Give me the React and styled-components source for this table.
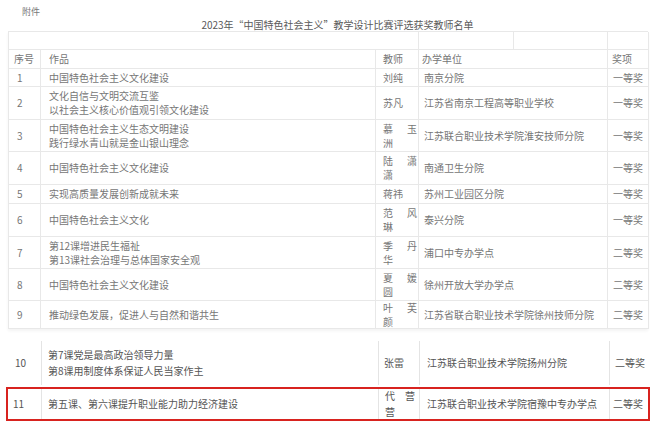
import React from 'react';
import styled, { createGlobalStyle } from 'styled-components';

const GlobalStyle = createGlobalStyle`
    html, body {
        margin: 0;
        padding: 0;
        background: #fff;
    }
    body {
        font-family: "Noto Sans CJK SC", "Noto Sans", sans-serif;
        color: #666;
    }
`

const Page = styled.div`
    width: 655px;
    height: 433px;
    overflow: hidden;
`

const Note = styled.div`
    padding: 5px 0 0 22px;
    height: 13px;
    font-size: 9px;
    line-height: 13px;
    color: #777;
`

const Title = styled.div`
    height: 13px;
    padding-left: 20px;
    text-align: center;
    font-size: 10px;
    line-height: 13px;
    color: #5a5a5a;
`

const Sheet = styled.div`
    margin: 0 7px 0 8px;
    border-top: 1px solid #e8e8e8;
    border-left: 1px solid #e8e8e8;
    box-shadow: 0 2px 3px rgba(0, 0, 0, 0.05);
`

const Row = styled.div`
    display: grid;
    grid-template-columns: ${p => p.$cols};
    height: ${p => p.$h}px;
    box-sizing: border-box;
`

const Cell = styled.div`
    display: flex;
    flex-direction: column;
    justify-content: center;
    padding: 0 0 0 ${p => p.$pad || 7}px;
    border-right: 1px solid #e8e8e8;
    border-bottom: 1px solid #e8e8e8;
    font-size: 10px;
    line-height: 14px;
    color: #767676;
    white-space: nowrap;
    overflow: hidden;
`

const Name = styled.div`
    display: grid;
    grid-template-columns: auto auto;
    justify-content: space-between;
    width: ${p => p.$w}px;
`

const Gap = styled.div`
    height: 10px;
`

const Lower = styled.div`
    margin: 0 5px 0 6px;
`

const LowerRow = styled.div`
    display: grid;
    grid-template-columns: 34px 337px 41px 190px 40px;
    height: ${p => p.$h}px;
    box-sizing: border-box;
    border: 2px solid ${p => (p.$marked ? '#d8231f' : 'transparent')};
`

const LowerCell = styled.div`
    display: flex;
    flex-direction: column;
    justify-content: center;
    padding-left: ${p => p.$pad || 6}px;
    border-right: ${p => (p.$last ? 'none' : '1px solid #e4e4e4')};
    font-size: 10px;
    line-height: 16px;
    color: #555;
    white-space: nowrap;
    overflow: hidden;
`

const COLS = '32px 335px 43px 189px 41px'
const TOP_COLS = '410px 95px 94px 41px'

const rows = [
    { no: '1', work: ['中国特色社会主义文化建设'], teacher: '刘纯', unit: '南京分院', award: '一等奖', h: 18 },
    { no: '2', work: ['文化自信与文明交流互鉴', '以社会主义核心价值观引领文化建设'], teacher: '苏凡', unit: '江苏省南京工程高等职业学校', award: '一等奖', h: 33 },
    { no: '3', work: ['中国特色社会主义生态文明建设', '践行绿水青山就是金山银山理念'], teacher: '慕玉洲', unit: '江苏联合职业技术学院淮安技师分院', award: '一等奖', h: 32 },
    { no: '4', work: ['中国特色社会主义文化建设'], teacher: '陆潇潇', unit: '南通卫生分院', award: '一等奖', h: 33 },
    { no: '5', work: ['实现高质量发展创新成就未来'], teacher: '蒋祎', unit: '苏州工业园区分院', award: '一等奖', h: 19 },
    { no: '6', work: ['中国特色社会主义文化'], teacher: '范风琳', unit: '泰兴分院', award: '一等奖', h: 33 },
    { no: '7', work: ['第12课增进民生福祉', '第13课社会治理与总体国家安全观'], teacher: '季丹华', unit: '浦口中专办学点', award: '二等奖', h: 32 },
    { no: '8', work: ['中国特色社会主义文化建设'], teacher: '夏媛圆', unit: '徐州开放大学办学点', award: '二等奖', h: 32 },
    { no: '9', work: ['推动绿色发展，促进人与自然和谐共生'], teacher: '叶芙颜', unit: '江苏省联合职业技术学院徐州技师分院', award: '二等奖', h: 28 },
]

const lowerRows = [
    { no: '10', work: ['第7课党是最高政治领导力量', '第8课用制度体系保证人民当家作主'], teacher: '张雷', unit: '江苏联合职业技术学院扬州分院', award: '二等奖', h: 48 },
    { no: '11', work: ['第五课、第六课提升职业能力助力经济建设'], teacher: '代营营', unit: '江苏联合职业技术学院宿豫中专办学点', award: '二等奖', h: 34, marked: true },
]

// three-character names wrap in the sheet: two spread on the first line, one below
const Teacher = ({ name, w }) => {
    if (name.length < 3) return <span>{name}</span>
    return (
        <Name $w={w}>
            {name.split('').map((c, i) => <span key={i}>{c}</span>)}
        </Name>
    )
}

export default function App() {
    return (
        <Page>
            <GlobalStyle />
            <Note>附件</Note>
            <Title>2023年“中国特色社会主义”教学设计比赛评选获奖教师名单</Title>

            <Sheet>
                <Row $cols={TOP_COLS} $h={18}>
                    <Cell />
                    <Cell />
                    <Cell />
                    <Cell />
                </Row>
                <Row $cols={COLS} $h={19}>
                    <Cell $pad={5}>序号</Cell>
                    <Cell $pad={8}>作品</Cell>
                    <Cell>教师</Cell>
                    <Cell $pad={3}>办学单位</Cell>
                    <Cell $pad={4}>奖项</Cell>
                </Row>
                {rows.map(r => (
                    <Row key={r.no} $cols={COLS} $h={r.h}>
                        <Cell $pad={8}>{r.no}</Cell>
                        <Cell $pad={8}>
                            {r.work.map((line, i) => <div key={i}>{line}</div>)}
                        </Cell>
                        <Cell>
                            <Teacher name={r.teacher} w={34} />
                        </Cell>
                        <Cell $pad={5}>{r.unit}</Cell>
                        <Cell $pad={5}>{r.award}</Cell>
                    </Row>
                ))}
            </Sheet>

            <Gap />

            <Lower>
                {lowerRows.map(r => (
                    <LowerRow key={r.no} $h={r.h} $marked={r.marked}>
                        <LowerCell $pad={r.marked ? 5 : 7}>{r.no}</LowerCell>
                        <LowerCell>
                            {r.work.map((line, i) => <div key={i}>{line}</div>)}
                        </LowerCell>
                        <LowerCell $pad={r.marked ? 6 : 5}>
                            <Teacher name={r.teacher} w={30} />
                        </LowerCell>
                        <LowerCell $pad={7}>{r.unit}</LowerCell>
                        <LowerCell $pad={r.marked ? 3 : 5} $last>{r.award}</LowerCell>
                    </LowerRow>
                ))}
            </Lower>
        </Page>
    )
}
